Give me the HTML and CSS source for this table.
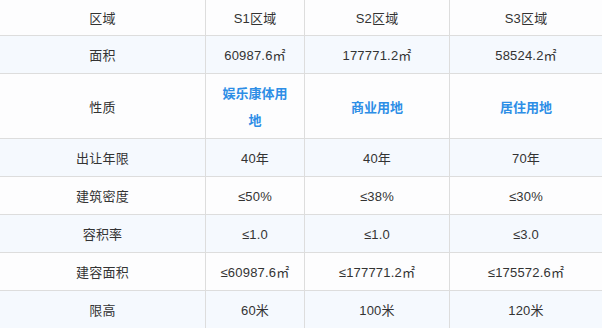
FILE: index.html
```html
<!DOCTYPE html>
<html lang="zh">
<head>
<meta charset="utf-8">
<link rel="stylesheet" href="styles.css">
</head>
<body>
<table class="land-table">
  <colgroup>
    <col class="c1"><col class="c2"><col class="c3"><col class="c4">
  </colgroup>
  <tr class="row head"><td>区域</td><td>S1区域</td><td>S2区域</td><td>S3区域</td></tr>
  <tr class="row alt"><td>面积</td><td>60987.6㎡</td><td>177771.2㎡</td><td>58524.2㎡</td></tr>
  <tr class="row"><td>性质</td><td><strong class="use">娱乐康体用地</strong></td><td><strong class="use">商业用地</strong></td><td><strong class="use">居住用地</strong></td></tr>
  <tr class="row alt"><td>出让年限</td><td>40年</td><td>40年</td><td>70年</td></tr>
  <tr class="row"><td>建筑密度</td><td>≤50%</td><td>≤38%</td><td>≤30%</td></tr>
  <tr class="row alt"><td>容积率</td><td>≤1.0</td><td>≤1.0</td><td>≤3.0</td></tr>
  <tr class="row"><td>建容面积</td><td>≤60987.6㎡</td><td>≤177771.2㎡</td><td>≤175572.6㎡</td></tr>
  <tr class="row alt"><td>限高</td><td>60米</td><td>100米</td><td>120米</td></tr>
</table>
</body>
</html>
```
FILE: styles.css
```css
html, body {
  margin: 0;
  padding: 0;
  background: #fdfdfe;
}
.land-table {
  width: 602px;
  table-layout: fixed;
  border-collapse: separate;
  border-spacing: 0;
  font-family: "Liberation Sans", "Noto Sans CJK SC", sans-serif;
  font-size: 13px;
  color: #333333;
}
.c1 { width: 206px; }
.c2 { width: 99px; }
.c3 { width: 145px; }
.c4 { width: 152px; }
.land-table td {
  box-sizing: border-box;
  padding: 6px 12px 4px;
  line-height: 27px;
  height: 38px;
  text-align: center;
  vertical-align: middle;
  white-space: nowrap;
  letter-spacing: 0.2px;
  border-right: 1px solid #dddddd;
  border-bottom: 1px solid #dddddd;
  background: #fdfdfe;
}
.land-table td:last-child {
  border-right: none;
}
.row.head td {
  height: 36px;
  padding-top: 5px;
  padding-bottom: 3px;
}
.row.alt td {
  background: #f5f9fe;
}
.use {
  color: #2d8ee6;
  font-weight: bold;
  white-space: normal;
  display: inline-block;
  max-width: 70px;
  letter-spacing: 0;
}
```
